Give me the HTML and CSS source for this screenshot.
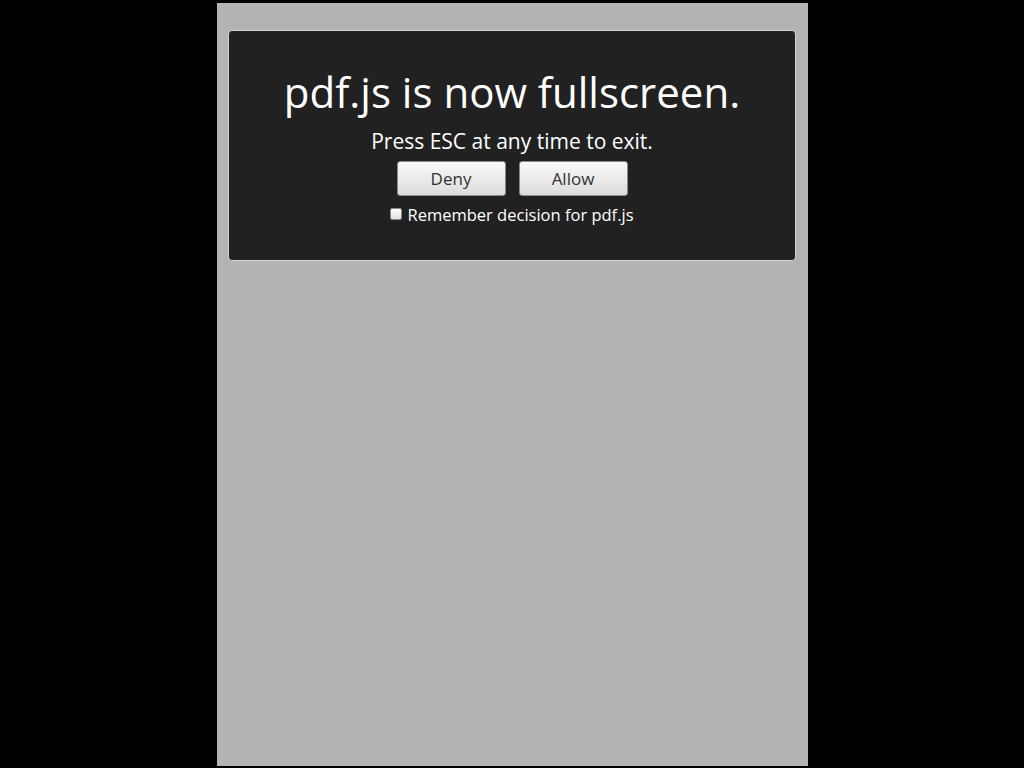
FILE: index.html
```html
<!DOCTYPE html>
<html>
<head>
<meta charset="utf-8">
<link rel="stylesheet" href="styles.css">
</head>
<body>
<div class="page">
  <div class="panel">
    <h1 class="title">pdf.js is now fullscreen.</h1>
    <p class="hint">Press ESC at any time to exit.</p>
    <div class="buttons">
      <button class="btn">Deny</button>
      <button class="btn">Allow</button>
    </div>
    <label class="remember"><span class="box"></span>Remember decision for pdf.js</label>
  </div>
</div>
</body>
</html>
```
FILE: styles.css
```css
html, body {
  margin: 0;
  padding: 0;
  background: #000;
  height: 768px;
  overflow: hidden;
}
body {
  font-family: "Open Sans", "Noto Sans", sans-serif;
}
.page {
  width: 591px;
  height: 763px;
  margin: 3px 0 0 217px;
  background: #b3b3b3;
  padding: 27px 12px 0 11px;
  box-sizing: border-box;
}
.panel {
  height: 231px;
  box-sizing: border-box;
  background: #212121;
  border: 1px solid #d4d4d4;
  border-radius: 4px;
  display: flex;
  flex-direction: column;
  align-items: center;
  color: #fff;
}
.title {
  margin: 39px 0 0;
  font-size: 42px;
  font-weight: 400;
  line-height: 44px;
}
.hint {
  margin: 14px 0 0;
  font-size: 21px;
  line-height: 26px;
}
.buttons {
  display: flex;
  gap: 13px;
  margin-top: 7px;
}
.btn {
  width: 109px;
  height: 35px;
  font-family: inherit;
  font-size: 17px;
  color: #333;
  border: 1px solid #8a8a8a;
  border-radius: 3px;
  background: linear-gradient(#fafafa, #dcdcdc);
  padding: 0;
}
.remember {
  display: flex;
  align-items: center;
  margin-top: 8px;
  font-size: 16.5px;
  line-height: 22px;
}
.box {
  width: 10px;
  height: 10px;
  border: 1px solid #888;
  border-radius: 2px;
  background: linear-gradient(#fff, #e0e0e0);
  margin: -3px 5px 0 0;
}
```
